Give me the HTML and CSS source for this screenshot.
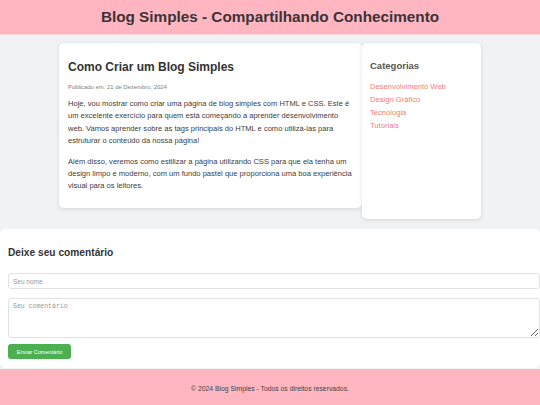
FILE: index.html
```html
<!DOCTYPE html>
<html lang="pt-BR">
<head>
<meta charset="utf-8">
<title>Blog Simples</title>
<link rel="stylesheet" href="styles.css">
</head>
<body>
<header class="site-header">
  <h1 class="site-title">Blog Simples - Compartilhando Conhecimento</h1>
</header>
<main class="layout">
  <article class="post">
    <h2 class="post-title">Como Criar um Blog Simples</h2>
    <p class="post-meta">Publicado em: 21 de Dezembro, 2024</p>
    <p class="post-text">Hoje, vou mostrar como criar uma página de blog simples com HTML e CSS. Este é um excelente exercício para quem está começando a aprender desenvolvimento web. Vamos aprender sobre as tags principais do HTML e como utilizá-las para estruturar o conteúdo da nossa página!</p>
    <p class="post-text">Além disso, veremos como estilizar a página utilizando CSS para que ela tenha um design limpo e moderno, com um fundo pastel que proporciona uma boa experiência visual para os leitores.</p>
  </article>
  <aside class="sidebar">
    <h3 class="sidebar-title">Categorias</h3>
    <ul class="cat-list">
      <li><a class="cat-link" href="#">Desenvolvimento Web</a></li>
      <li><a class="cat-link" href="#">Design Gráfico</a></li>
      <li><a class="cat-link" href="#">Tecnologia</a></li>
      <li><a class="cat-link" href="#">Tutorials</a></li>
    </ul>
  </aside>
</main>
<section class="comments">
  <h3 class="comments-title">Deixe seu comentário</h3>
  <form class="comment-form">
    <input class="field field-name" type="text" placeholder="Seu nome">
    <textarea class="field field-text" placeholder="Seu comentário"></textarea>
    <button class="btn" type="button">Enviar Comentário</button>
  </form>
</section>
<footer class="site-footer">
  <p class="footer-text">© 2024 Blog Simples - Todos os direitos reservados.</p>
</footer>
</body>
</html>
```
FILE: styles.css
```css
* { box-sizing: border-box; }
html, body { margin: 0; padding: 0; }
body {
  background: #f0f2f4;
  font-family: "Liberation Sans", Arial, sans-serif;
  color: #333;
  overflow: hidden;
}
.site-header {
  background: #ffb6c1;
  height: 34px;
  display: flex;
  align-items: center;
  justify-content: center;
  box-shadow: 0 1px 0 #fbd4da;
}
.site-title {
  margin: 0;
  font-size: 15.3px;
  font-weight: bold;
  color: #3b3336;
}
.layout {
  display: flex;
  align-items: flex-start;
  width: 422px;
  margin: 9px auto 0;
}
.post {
  width: 303px;
  background: #fff;
  border-radius: 5px;
  box-shadow: 0 1px 4px rgba(0,0,0,0.12);
  padding: 9px 9px 7px;
}
.post-title {
  margin: 8px 0 8px;
  font-size: 12px;
  line-height: 15px;
  font-weight: bold;
  color: #333;
}
.post-meta {
  margin: 0 0 7px;
  font-size: 5.9px;
  line-height: 8px;
  color: #808080;
}
.post-text {
  margin: 0 0 8px;
  font-size: 7.55px;
  line-height: 12.4px;
  color: #3d3d3d;
}
.sidebar {
  width: 119px;
  height: 176px;
  background: #fff;
  border-radius: 5px;
  box-shadow: 0 1px 4px rgba(0,0,0,0.12);
  padding: 17px 8px 8px;
}
.sidebar-title {
  margin: 0 0 8px;
  font-size: 9.5px;
  line-height: 12px;
  color: #555;
}
.cat-list {
  list-style: none;
  margin: 0;
  padding: 0;
}
.cat-list li {
  font-size: 7.6px;
  line-height: 13px;
}
.cat-link {
  color: #f08080;
  text-decoration: none;
}
.comments {
  margin-top: 10px;
  background: #fff;
  border-radius: 5px;
  padding: 17px 0 8px 8px;
  height: 139px;
}
.comments-title {
  margin: 0 0 13px;
  font-size: 10.2px;
  line-height: 14px;
  color: #333;
}
.comment-form {
  display: flex;
  flex-direction: column;
  align-items: flex-start;
}
.field {
  width: 100%;
  border: 1px solid #e2e2e2;
  border-radius: 3px;
  background: #fff;
  font-size: 6.5px;
  padding: 4px;
  color: #333;
}
.field::placeholder { color: #999; }
.field-name {
  height: 16px;
  font-family: "Liberation Sans", Arial, sans-serif;
  margin: 0 0 9px;
}
.field-text {
  height: 40px;
  font-family: "Liberation Mono", "DejaVu Sans Mono", monospace;
  margin: 0 0 6px;
}
.btn {
  width: 63px;
  height: 15px;
  background: #4caf50;
  color: #fff;
  border: none;
  border-radius: 3px;
  font-size: 5.5px;
  font-family: "Liberation Sans", Arial, sans-serif;
  padding: 0;
}
.site-footer {
  background: #ffb6c1;
  height: 38px;
  display: flex;
  align-items: center;
  justify-content: center;
  margin-top: 1px;
}
.footer-text {
  margin: 0;
  font-size: 6.8px;
  color: #444;
}
```
